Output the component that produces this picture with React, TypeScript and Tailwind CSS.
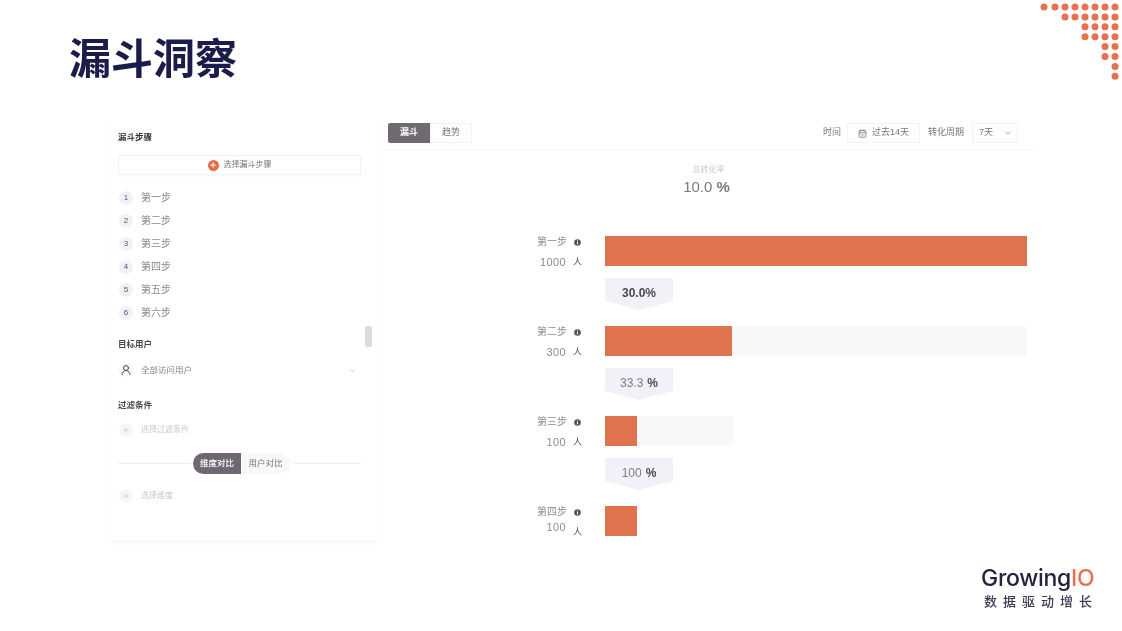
import { ChevronDown, CalendarDays, Plus, UserRound } from "lucide-react";

const steps = ["第一步", "第二步", "第三步", "第四步", "第五步", "第六步"];

const funnel = [
    { name: "第一步", count: "1000", track: "w-[422px]", fill: "w-[422px]", rate: "30.0", unit: "%", countPos: "translate-y-[2px]", unitPos: "" },
    { name: "第二步", count: "300", track: "w-[422px]", fill: "w-[127px]", rate: "33.3", unit: "%", countPos: "translate-y-[2px]", unitPos: "" },
    { name: "第三步", count: "100", track: "w-[128px]", fill: "w-[32px]", rate: "100", unit: "%", countPos: "translate-y-[2px]", unitPos: "" },
    { name: "第四步", count: "100", track: "w-[32px]", fill: "w-[32px]", rate: "", unit: "", countPos: "-translate-y-[3px]", unitPos: "translate-y-[5px]" },
];

const dotRows = [
    [1044, 1055, 1065, 1075, 1085, 1095, 1105, 1115],
    [1065, 1075, 1085, 1095, 1105, 1115],
    [1085, 1095, 1105, 1115],
    [1085, 1095, 1105, 1115],
    [1105, 1115],
    [1105, 1115],
    [1115],
    [1115],
];

function Dots() {
    return (
        <svg width="83" height="82" viewBox="1039 0 83 82" className="shrink-0 blur-[0.5px]">
            {dotRows.map((row, y) =>
                row.map((x) => (
                    <circle key={`${x}-${y}`} cx={x} cy={7 + y * 9.9} r="3.5" fill="#e8704f" />
                ))
            )}
        </svg>
    );
}

function InfoDot() {
    return (
        <svg width="7" height="7" viewBox="0 0 7 7" className="shrink-0">
            <circle cx="3.5" cy="3.5" r="3.3" fill="#55525a" />
            <rect x="3" y="3" width="1" height="2.4" fill="#fff" />
            <rect x="3" y="1.4" width="1" height="1" fill="#fff" />
        </svg>
    );
}

function LeftPanel() {
    return (
        <div className="relative w-[270px] h-[422px] pl-[10px] pr-[17px] pt-[14px] bg-white shadow-[0_3px_5px_rgba(0,0,0,0.03)] blur-[0.7px]">
            <h3 className="h-[10px] leading-[10px] text-[8.5px] font-bold text-[#33313a]">漏斗步骤</h3>
            <div className="mt-[13px] h-[20px] flex items-center justify-center gap-[5px] border border-[#f2f2f4] rounded-[2px] shadow-[0_1px_2px_rgba(0,0,0,0.03)] text-[8px] text-[#77757c]">
                <span className="w-[11px] h-[11px] rounded-full bg-[#df6f4c] flex items-center justify-center">
                    <Plus size={8} strokeWidth={3} color="#fff" />
                </span>
                选择漏斗步骤
            </div>
            <ul className="mt-[11px]">
                {steps.map((step, i) => (
                    <li key={step} className="h-[23px] flex items-center gap-[8px]">
                        <span className="ml-[1px] w-[14px] h-[14px] rounded-full bg-[#f2f1fa] flex items-center justify-center text-[8px] text-[#55535e]">
                            {i + 1}
                        </span>
                        <span className="text-[10px] text-[#8a888e]">{step}</span>
                    </li>
                ))}
            </ul>
            <h3 className="mt-[15px] h-[10px] leading-[10px] text-[8.5px] font-bold text-[#4a4850]">目标用户</h3>
            <div className="mt-[10px] h-[22px] flex items-center gap-[8px]">
                <span className="ml-[1px] w-[14px] h-[14px] rounded-full bg-[#f5f4fb] flex items-center justify-center">
                    <UserRound size={12} color="#4b4a60" />
                </span>
                <span className="text-[8.5px] text-[#85838a]">全部访问用户</span>
                <ChevronDown size={11} color="#c9c9cc" className="ml-auto mr-[3px]" />
            </div>
            <h3 className="mt-[19px] h-[10px] leading-[10px] text-[8.5px] font-bold text-[#4a4850]">过滤条件</h3>
            <div className="mt-[9px] h-[22px] flex items-center gap-[8px] text-[8px] text-[#c8c8ca]">
                <span className="ml-[1px] w-[14px] h-[14px] rounded-full bg-[#f6f6f7] flex items-center justify-center">
                    <Plus size={8} color="#c5c5c8" />
                </span>
                选择过滤条件
            </div>
            <div className="mt-[12px] flex items-center">
                <div className="w-[73px] h-px bg-[#eeeef0]" />
                <div className="flex h-[21px] ml-[2px] mr-[3px] text-[8.5px]">
                    <span className="w-[48px] rounded-l-full bg-[#6d6870] text-white font-medium flex items-center justify-center">维度对比</span>
                    <span className="w-[49px] rounded-r-full bg-[#f8f8f9] text-[#77757c] flex items-center justify-center">用户对比</span>
                </div>
                <div className="flex-1 h-px bg-[#eeeef0]" />
            </div>
            <div className="mt-[11px] h-[22px] flex items-center gap-[8px] text-[8px] text-[#c8c8ca]">
                <span className="ml-[1px] w-[14px] h-[14px] rounded-full bg-[#f6f6f7] flex items-center justify-center">
                    <Plus size={8} color="#c5c5c8" />
                </span>
                选择维度
            </div>
            <div className="absolute left-[257px] top-[208px] w-[7px] h-[21px] rounded-[2px] bg-[#dcdcdf]" />
        </div>
    );
}

function RightPanel() {
    return (
        <div className="ml-[2px] w-[655px] h-[420px] overflow-hidden bg-white blur-[0.7px]">
            <div className="h-[32px] pl-[8px] pr-[17px] pt-[5px] flex items-start border-b border-[#f6f6f7] text-[9px] text-[#77757c]">
                <span className="w-[42px] h-[20px] bg-[#6f6a72] text-white font-bold rounded-l-[2px] flex items-center justify-center">漏斗</span>
                <span className="w-[42px] h-[20px] border border-[#f3f3f4] rounded-r-[2px] flex items-center justify-center">趋势</span>
                <span className="ml-auto h-[20px] flex items-center">时间</span>
                <span className="ml-[6px] w-[73px] h-[20px] border border-[#f3f3f4] flex items-center justify-center gap-[5px]">
                    <CalendarDays size={9} color="#77757c" />
                    过去14天
                </span>
                <span className="ml-[8px] h-[20px] flex items-center">转化周期</span>
                <span className="ml-[8px] w-[46px] h-[20px] border border-[#f3f3f4] pl-[6px] pr-[4px] flex items-center justify-between">
                    7天
                    <ChevronDown size={10} color="#99979c" />
                </span>
            </div>
            <div className="mt-[15px] pl-[2px] text-center text-[8px] leading-[10px] text-[#c9c9cb]">总转化率</div>
            <div className="mt-[3px] pr-[2px] text-center text-[15px] leading-[18px] text-[#7b7b7e]">
                10.0 <span className="font-bold">%</span>
            </div>
            <div className="mt-[40px] flex flex-col">
                {funnel.map((row) => (
                    <div key={row.name}>
                        <div className="flex h-[30px]">
                            <div className="w-[201px] shrink-0 flex flex-col items-end justify-between text-[10px] leading-[12px] text-[#8e8c92]">
                                <div className="flex items-center gap-[7px]">
                                    {row.name}
                                    <InfoDot />
                                </div>
                                <div className={`flex gap-[7px] text-[11px] tracking-[0.4px] ${row.countPos}`}>
                                    {row.count}
                                    <span className={`w-[8px] text-[9px] text-[#55525a] ${row.unitPos}`}>人</span>
                                </div>
                            </div>
                            <div className="ml-[24px] h-full">
                                <div className={`${row.track} h-full rounded-r-[2px] bg-[#f8f8f8]`}>
                                    <div className={`${row.fill} h-full bg-[#df734d]`} />
                                </div>
                            </div>
                        </div>
                        {row.rate && (
                            <div className="ml-[225px] mt-[12px] mb-[16px] w-[68px] h-[32px] bg-[#f1f2f8] [clip-path:polygon(0_0,100%_0,100%_72%,50%_100%,0_72%)] flex items-start justify-center pt-[8px] text-[12px] leading-[14px] text-[#7b7d8c]">
                                <span className={row.rate === "30.0" ? "font-bold text-[#4a4a55]" : ""}>{row.rate}</span>
                                <span className={row.rate === "30.0" ? "font-bold text-[#4a4a55]" : "ml-[4px] font-bold text-[#4a4a55]"}>{row.unit}</span>
                            </div>
                        )}
                    </div>
                ))}
            </div>
        </div>
    );
}

export default function App() {
    return (
        <div className="w-[1122px] h-[631px] overflow-hidden bg-white font-['Liberation_Sans','Noto_Sans_CJK_SC',sans-serif]">
            <div className="h-[118px] flex justify-between items-start pl-[69px]">
                <h1 className="mt-[36px] text-[42px] leading-[48px] font-bold text-[#1c1c4a] blur-[0.5px]">漏斗洞察</h1>
                <Dots />
            </div>
            <div className="pl-[108px] flex items-start">
                <LeftPanel />
                <RightPanel />
            </div>
            <div className="mt-[25px] ml-[981px] w-[113px] blur-[0.5px]">
                <div className="text-[23px] leading-[26px] font-['Inter',sans-serif] font-medium tracking-[-0.3px] text-[#23233f] whitespace-nowrap">
                    Growing<span className="text-[#e8704f]">IO</span>
                </div>
                <div className="mt-[2px] pl-[3px] text-[13px] leading-[16px] tracking-[6px] font-medium text-[#3b3b55] whitespace-nowrap font-['Noto_Sans_CJK_SC',sans-serif]">
                    数据驱动增长
                </div>
            </div>
        </div>
    );
}
